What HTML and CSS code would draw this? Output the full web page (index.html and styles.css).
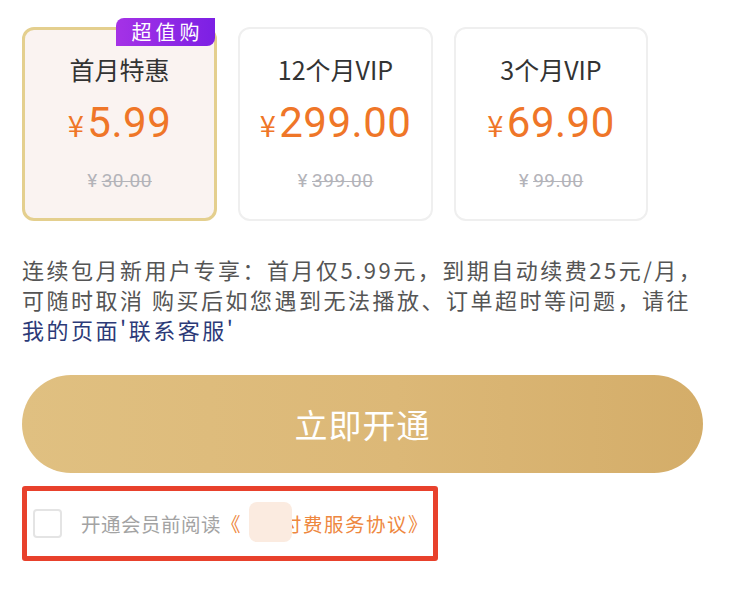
FILE: index.html
```html
<!DOCTYPE html>
<html lang="zh-CN">
<head>
<meta charset="utf-8">
<title>开通会员</title>
<link rel="stylesheet" href="styles.css">
</head>
<body>
<div class="page">
  <div class="plans">
    <div class="plan plan-active">
      <div class="badge">超值购</div>
      <div class="plan-title">首月特惠</div>
      <div class="plan-price"><span class="yen">¥</span>5.99</div>
      <div class="plan-orig">¥<s>30.00</s></div>
    </div>
    <div class="plan">
      <div class="plan-title">12个月VIP</div>
      <div class="plan-price"><span class="yen">¥</span>299.00</div>
      <div class="plan-orig">¥<s>399.00</s></div>
    </div>
    <div class="plan">
      <div class="plan-title">3个月VIP</div>
      <div class="plan-price"><span class="yen">¥</span>69.90</div>
      <div class="plan-orig">¥<s>99.00</s></div>
    </div>
  </div>

  <p class="desc">连续包月新用户专享：首月仅5.99元，到期自动续费25元/月，<br>可随时取消 购买后如您遇到无法播放、订单超时等问题，请往<br><span class="desc-link">我的页面'联系客服'</span></p>

  <button class="cta">立即开通</button>

  <div class="agree">
    <span class="checkbox"></span>
    <span class="agree-text">开通会员前阅读</span><span class="agree-link">《<span class="mask"></span>付费服务协议》</span>
  </div>
</div>
</body>
</html>
```

FILE: styles.css
```css
* { box-sizing: border-box; }

html, body {
  margin: 0;
  padding: 0;
  background: #ffffff;
}

body {
  font-family: "Noto Sans CJK SC", "Noto Sans", sans-serif;
  color: #333;
}

.page {
  padding: 27px 27px 0 22px;
}

.plans {
  display: grid;
  grid-template-columns: 195px 195px 194px;
  column-gap: 21px;
}

.plan {
  position: relative;
  height: 194px;
  border: 2px solid #efefef;
  border-radius: 12px;
  background: #ffffff;
  display: flex;
  flex-direction: column;
  align-items: center;
  padding-top: 20px;
}

.plan-active {
  border: 3px solid #e4cf8e;
  background: #faf3f1;
  padding-top: 19px;
}

.badge {
  position: absolute;
  top: -12px;
  right: -1px;
  width: 99px;
  height: 28px;
  border-radius: 8px 0 8px 0;
  background: linear-gradient(90deg, #a532e6, #7c20e4);
  color: #fff;
  font-size: 20px;
  line-height: 28px;
  text-align: center;
  letter-spacing: 4px;
  padding-left: 4px;
}

.plan-title {
  font-size: 25px;
  line-height: 40px;
  color: #333;
}

.plan-price {
  margin-top: 10px;
  font-family: Roboto, "Noto Sans", sans-serif;
  font-size: 42px;
  line-height: 48px;
  color: #ef7628;
  letter-spacing: 0.5px;
}

.yen {
  font-family: "Noto Sans CJK SC", sans-serif;
  font-size: 29px;
  margin-right: 3px;
}

.plan-orig {
  margin-top: 21px;
  font-family: Roboto, "Noto Sans", sans-serif;
  font-size: 19px;
  line-height: 24px;
  color: #b3b3b9;
  letter-spacing: 0.5px;
}

.plan-orig s {
  margin-left: 4px;
  text-decoration-thickness: 1px;
}

.desc {
  margin: 33px 0 0;
  font-size: 22px;
  line-height: 30px;
  color: #555;
  letter-spacing: 2.5px;
  white-space: nowrap;
}

.desc-link {
  color: #2c3a78;
}

.cta {
  display: block;
  margin-top: 31px;
  width: 681px;
  height: 98px;
  border: 0;
  border-radius: 49px;
  background: linear-gradient(90deg, #e0c081 0%, #dcb877 55%, #d4ad69 100%);
  color: #fff;
  font-family: "Noto Sans CJK SC", sans-serif;
  font-size: 33px;
  letter-spacing: 1px;
  padding: 0;
}

.agree {
  margin-top: 13px;
  width: 416px;
  height: 75px;
  border: 5px solid #e8412c;
  border-radius: 3px;
  display: flex;
  align-items: center;
  padding-left: 6px;
}

.checkbox {
  width: 29px;
  height: 29px;
  border: 2px solid #e4e4e4;
  border-radius: 4px;
  flex: none;
  margin-right: 19px;
  background: #fff;
}

.agree-text {
  font-size: 19.5px;
  color: #a3a3a3;
  letter-spacing: 0.5px;
}

.agree-link {
  position: relative;
  font-size: 19.5px;
  color: #ee8740;
  letter-spacing: 1.5px;
}

.mask {
  display: inline-block;
  width: 40px;
}

.agree-link::after {
  content: "";
  position: absolute;
  left: 28px;
  top: -7px;
  width: 43px;
  height: 40px;
  border-radius: 8px;
  background: #fbebe0;
}
```
